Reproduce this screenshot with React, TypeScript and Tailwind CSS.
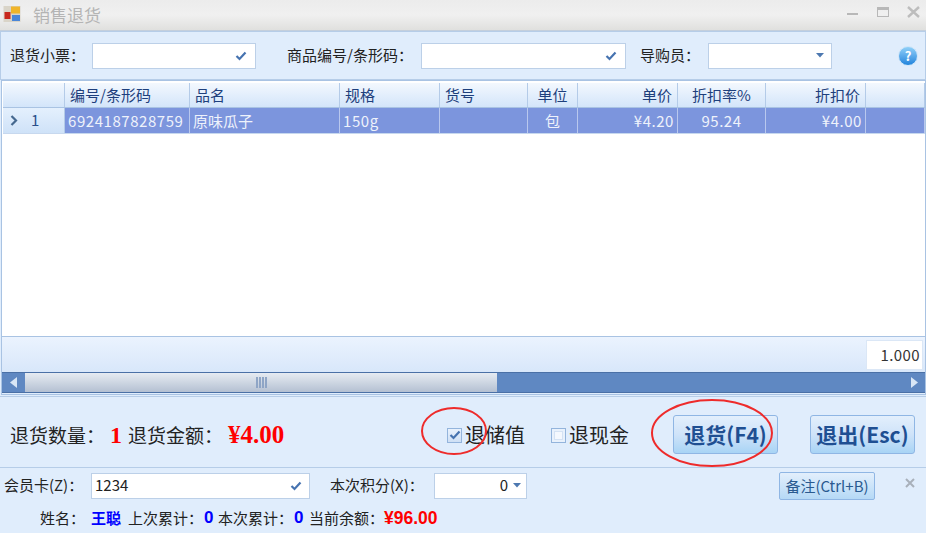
import React from "react";

const font = { fontFamily: '"Noto Sans CJK SC", "Liberation Sans", sans-serif' };

function Tick({ className = "" }: { className?: string }) {
  return (
    <svg width="12" height="10" viewBox="0 0 12 10" className={className}>
      <path d="M1.5 5 L4.5 8 L10.5 1.5" fill="none" stroke="#4673b0" strokeWidth="2.2" />
    </svg>
  );
}

function Caret() {
  return (
    <svg width="8" height="5" viewBox="0 0 8 5">
      <path d="M0 0 H8 L4 4.5 Z" fill="#4d78b0" />
    </svg>
  );
}

const cols = [
  { w: "w-[61px]", label: "", cell: "1", align: "", track: "" },
  { w: "w-[125px]", label: "编号/条形码", cell: "6924187828759", align: "text-left", track: "tracking-[0.55px]" },
  { w: "w-[150px]", label: "品名", cell: "原味瓜子", align: "text-left", track: "" },
  { w: "w-[100px]", label: "规格", cell: "150g", align: "text-left", track: "tracking-[0.55px]" },
  { w: "w-[88px]", label: "货号", cell: "", align: "text-left", track: "" },
  { w: "w-[50px]", label: "单位", cell: "包", align: "text-center", track: "" },
  { w: "w-[100px]", label: "单价", cell: "¥4.20", align: "text-right", track: "tracking-[0.55px]" },
  { w: "w-[88px]", label: "折扣率%", cell: "95.24", align: "text-center", track: "tracking-[0.55px]" },
  { w: "w-[100px]", label: "折扣价", cell: "¥4.00", align: "text-right", track: "tracking-[0.55px]" },
  { w: "flex-1", label: "", cell: "", align: "", track: "" },
];

const serifBold = { fontFamily: '"Liberation Serif", serif' };
const sansBold = { fontFamily: '"Liberation Sans", sans-serif' };

export default function App() {
  return (
    <div style={font} className="relative w-[926px] h-[533px] overflow-hidden bg-[#e0edfc] text-[#333] whitespace-nowrap">
      {/* title bar */}
      <div className="h-[31px] flex items-center bg-gradient-to-b from-[#ececec] via-[#f0f0f0] to-[#e0e0de] border-b border-[#c4cfdc]">
        <svg width="18" height="18" viewBox="0 0 18 18" className="ml-[3px] mb-[2px]">
          <rect x="0.5" y="1" width="17" height="16" fill="#d9d4c8" />
          <rect x="8" y="1.5" width="9" height="7" fill="#f0b429" />
          <rect x="1.5" y="7" width="6" height="7" fill="#c8281e" />
          <rect x="9" y="10" width="8" height="6" fill="#4a86d8" />
        </svg>
        <span className="ml-[12px] text-[17px] leading-none text-[#b4b4b4] mb-[2px]">销售退货</span>
        <div className="ml-auto flex items-center pr-[6px] pb-[6px]">
          <div className="w-[11px] h-[2px] bg-[#b8b8b8] mt-[3px]" />
          <div className="ml-[19px] w-[12px] h-[10px] border border-[#b8b8b8] border-t-[3px]" />
          <svg width="13" height="13" viewBox="0 0 13 13" className="ml-[18px]">
            <path d="M1 1 L12 11 M12 1 L1 11" stroke="#bdbdbd" strokeWidth="2.4" />
          </svg>
        </div>
      </div>

      {/* filter panel */}
      <div className="h-[49px] flex items-center border border-[#b6cde8] bg-[#e0edfc] text-[15px] text-[#222]">
        <span className="ml-[9px] w-[82px]">退货小票：</span>
        <div className="w-[164px] h-[26px] bg-white border border-[#bcd0e8] flex items-center justify-end pr-[8px]">
          <Tick />
        </div>
        <span className="ml-[31px] w-[134px]">商品编号/条形码：</span>
        <div className="w-[205px] h-[26px] bg-white border border-[#bcd0e8] flex items-center justify-end pr-[8px]">
          <Tick />
        </div>
        <span className="ml-[14px] w-[68px]">导购员：</span>
        <div className="w-[124px] h-[26px] bg-white border border-[#bcd0e8] flex items-center justify-end pr-[7px]">
          <Caret />
        </div>
        <div className="ml-[66px] w-[20px] h-[20px] rounded-full bg-gradient-to-b from-[#8fd0f8] to-[#1d84dc] border border-[#cfe6fa] flex items-center justify-center text-white text-[13px] font-bold leading-none">
          ?
        </div>
      </div>

      {/* grid */}
      <div className="h-[257px] ml-[1px] border border-[#a9c3e3] flex flex-col bg-white">
        <div className="h-[25px] mt-[2px] ml-[1px] flex bg-gradient-to-b from-[#f3f8fe] to-[#d3e5fa] border-b border-[#a9c3e3] text-[15px] text-[#1e3f7c]">
          {cols.map((c, i) => (
            <div
              key={i}
              className={`${i === 0 ? "w-[62px]" : c.w} border-r border-[#b4cbe8] flex items-center px-[5px] ${
                c.align === "text-right" ? "justify-end" : c.align === "text-center" ? "justify-center" : "justify-start"
              }`}
            >
              {c.label}
            </div>
          ))}
        </div>
        <div className="h-[26px] ml-[1px] flex border-b border-[#c7d8ee] text-[15px] bg-[#7c95dd] text-[#eef2fb]">
          {cols.map((c, i) =>
            i === 0 ? (
              <div
                key={i}
                className="w-[62px] flex items-center bg-gradient-to-b from-[#e4f0fd] to-[#cfe2f8] border-r border-[#b4cbe8] text-[#2a4f8a]"
              >
                <svg width="8" height="11" viewBox="0 0 8 11" className="ml-[7px]">
                  <path d="M1.5 1 L6 5.5 L1.5 10" fill="none" stroke="#45688f" strokeWidth="2.2" />
                </svg>
                <span className="ml-[13px]">{c.cell}</span>
              </div>
            ) : (
              <div key={i} className={`${c.w} ${c.align} ${c.track} border-r border-[#b9c8ee] leading-[25px] px-[3px]`}>
                {c.cell}
              </div>
            )
          )}
        </div>
        <div className="flex-1" />
      </div>

      {/* summary row + scrollbar */}
      <div className="ml-[1px] border-x border-b border-[#a9c3e3] h-[58px] flex flex-col">
        <div className="h-[35px] flex items-center justify-end pr-[2px] bg-gradient-to-b from-[#ebf3fe] to-[#d8e7fa]">
          <div className="w-[57px] h-[30px] bg-white border border-[#dbe7f6] text-right pr-[2px] leading-[28px] text-[15px] tracking-[0.4px] text-[#333]">
            1.000
          </div>
        </div>
        <div className="h-[21px] flex items-center bg-[#5f88c2] border-y border-[#4a70a6]">
          <div className="w-[23px] flex items-center justify-center">
            <svg width="7" height="11" viewBox="0 0 7 11">
              <path d="M7 0 V11 L0 5.5 Z" fill="#d8e6f6" />
            </svg>
          </div>
          <div className="w-[472px] h-[19px] bg-gradient-to-b from-[#e6ebf2] via-[#cdd6e2] to-[#b4c0d2] flex items-center justify-center gap-[1px]">
            {[0, 1, 2, 3].map((i) => (
              <div key={i} className="w-[2px] h-[11px] bg-[#8ea5c6]" />
            ))}
          </div>
          <div className="ml-auto w-[14px] flex items-center">
            <svg width="7" height="11" viewBox="0 0 7 11">
              <path d="M0 0 V11 L7 5.5 Z" fill="#d8e6f6" />
            </svg>
          </div>
        </div>
      </div>

      {/* bottom action panel */}
      <div className="h-[72px] mt-[1px] border-t border-b border-[#b6cde8] flex items-center text-[#222]">
        <span className="ml-[10px] w-[100px] text-[19px] mt-[6px]">退货数量：</span>
        <span className="w-[18px] text-[24px] font-bold text-[#ff0000] mt-[6px]" style={serifBold}>1</span>
        <span className="w-[100px] text-[19px] mt-[6px]">退货金额：</span>
        <span className="w-[219px] text-[25px] font-bold text-[#ff0000] mt-[6px]" style={serifBold}>¥4.00</span>
        <div className="w-[15px] h-[15px] mt-[6px] border border-[#93b4dc] bg-gradient-to-b from-[#e8f1fc] to-[#cfe0f5] flex items-center justify-center">
          <Tick />
        </div>
        <span className="ml-[3px] w-[86px] text-[20px] mt-[6px]">退储值</span>
        <div className="w-[15px] h-[15px] mt-[6px] border border-[#93b4dc] bg-[#e8f1fc] p-[2px]">
          <div className="w-full h-full bg-[#f4f8fe] border border-[#d4e2f4]" />
        </div>
        <span className="ml-[3px] w-[104px] text-[20px] mt-[6px]">退现金</span>
        <button className="w-[105px] h-[39px] mt-[4px] rounded-[3px] border border-[#8fb6e4] bg-gradient-to-b from-[#e3effc] via-[#cfe3f9] to-[#a8d4f5] text-[#1f4f92] text-[21px] leading-none font-bold">
          退货(F4)
        </button>
        <button className="ml-[32px] w-[105px] h-[39px] mt-[4px] rounded-[3px] border border-[#8fb6e4] bg-gradient-to-b from-[#e3effc] via-[#cfe3f9] to-[#a8d4f5] text-[#1f4f92] text-[21px] leading-none font-bold">
          退出(Esc)
        </button>
      </div>

      {/* member panel */}
      <div className="flex flex-col">
        <div className="h-[35px] flex items-center text-[15px] text-[#222]">
          <span className="ml-[4px] w-[87px]">会员卡(Z)：</span>
          <div className="w-[219px] h-[26px] bg-white border border-[#bcd0e8] flex items-center justify-between pl-[3px] pr-[7px]">
            <span className="text-[#222]">1234</span>
            <Tick />
          </div>
          <span className="ml-[20px] w-[104px]">本次积分(X)：</span>
          <div className="w-[93px] h-[26px] bg-white border border-[#bcd0e8] flex items-center justify-end pr-[5px] gap-[5px]">
            <span>0</span>
            <Caret />
          </div>
          <button className="ml-[252px] w-[96px] h-[28px] rounded-[2px] border border-[#8fb6e4] bg-gradient-to-b from-[#e3effc] to-[#b5d9f6] text-[#2a5a90] text-[15px] leading-none">
            备注(Ctrl+B)
          </button>
          <svg width="10" height="10" viewBox="0 0 10 10" className="ml-[30px] mb-[6px]">
            <path d="M1 1 L9 9 M9 1 L1 9" stroke="#a8b0ba" strokeWidth="2" />
          </svg>
        </div>
        <div className="h-[24px] flex items-center text-[15px] text-[#222] pl-[40px] mt-[3px]">
          <span className="w-[51px]">姓名：</span>
          <span className="w-[37px] font-bold text-[#0000ff]">王聪</span>
          <span className="w-[76px]">上次累计：</span>
          <span className="w-[14px] text-[17px] font-bold text-[#0000ff]" style={sansBold}>0</span>
          <span className="w-[76px]">本次累计：</span>
          <span className="w-[15px] text-[17px] font-bold text-[#0000ff]" style={sansBold}>0</span>
          <span className="w-[75px]">当前余额：</span>
          <span className="text-[17.5px] font-bold text-[#ff0000]" style={sansBold}>¥96.00</span>
        </div>
      </div>

      {/* red hand-drawn annotations */}
      <svg width="926" height="533" viewBox="0 0 926 533" className="absolute left-0 top-0 pointer-events-none">
        <ellipse cx="454" cy="431" rx="32" ry="23" fill="none" stroke="#ee2b2b" strokeWidth="2" />
        <ellipse cx="712" cy="433" rx="60" ry="33" fill="none" stroke="#ee2b2b" strokeWidth="2" />
      </svg>
    </div>
  );
}
